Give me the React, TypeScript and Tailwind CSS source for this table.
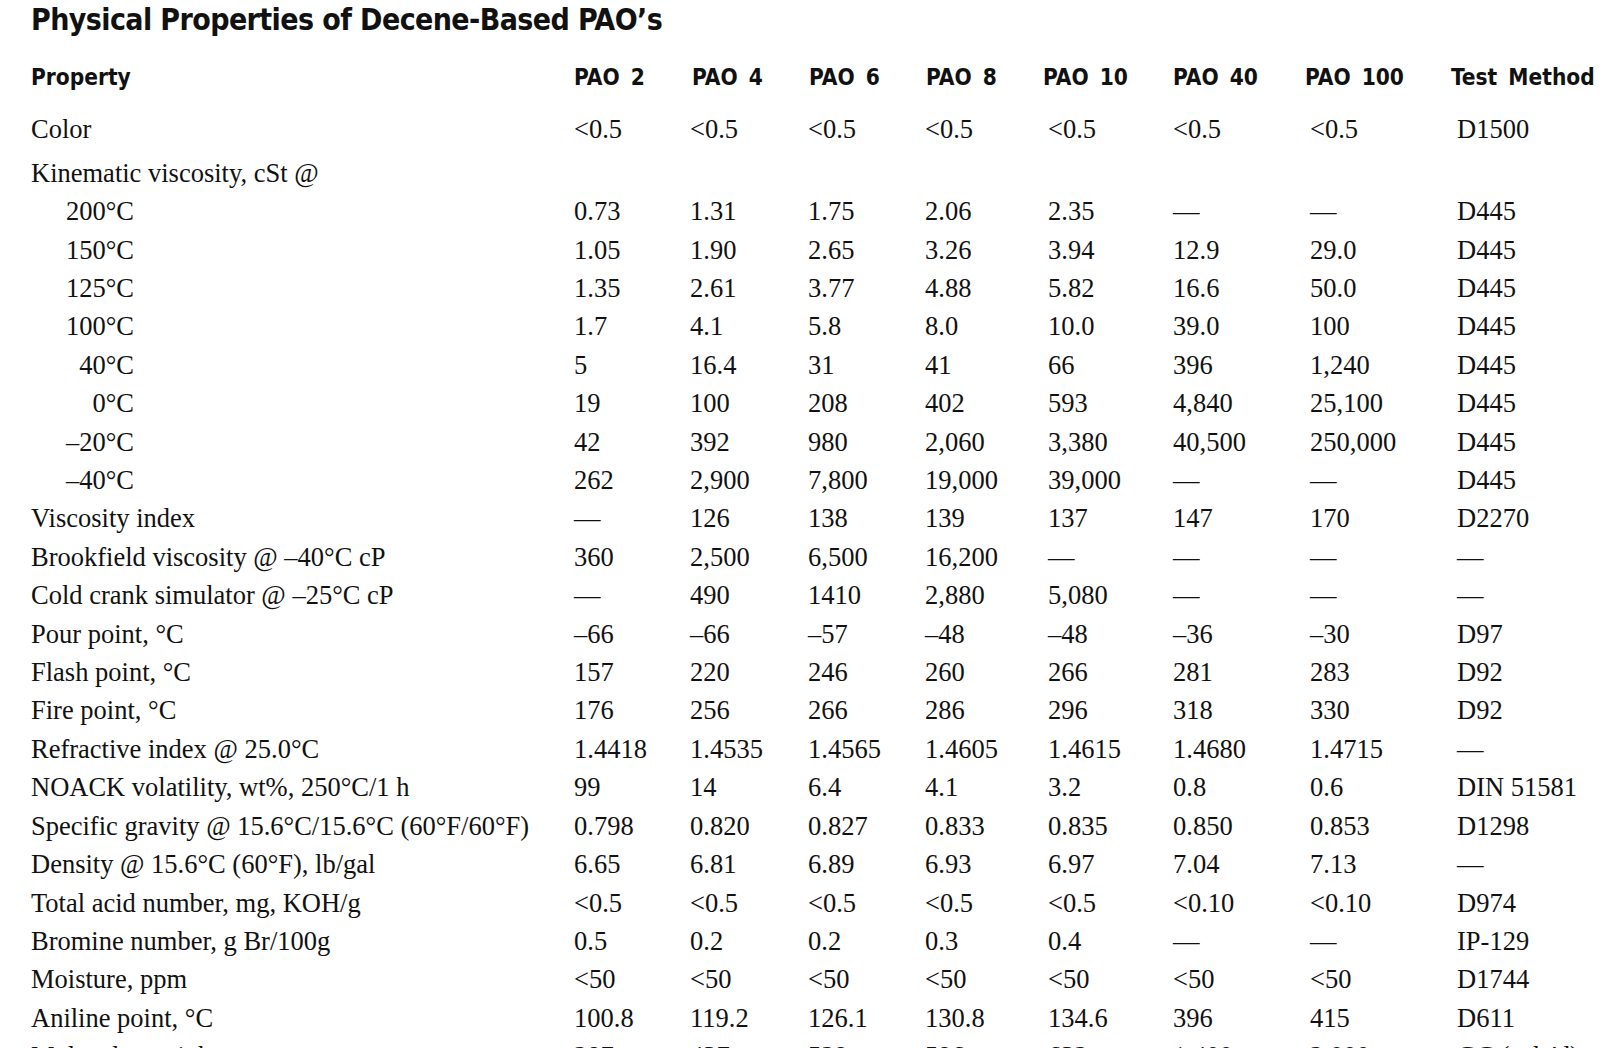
const COLS = "grid grid-cols-[543px_116px_118px_117px_123px_125px_137px_147px_1fr]";

const HEAD_FONT = "font-bold font-['Liberation_Sans_Narrow','DejaVu_Sans_Condensed',sans-serif]";

const HEADERS = [
  { label: "PAO 2", cls: "" },
  { label: "PAO 4", cls: "ml-[2px]" },
  { label: "PAO 6", cls: "ml-[1px]" },
  { label: "PAO 8", cls: "ml-[1px]" },
  { label: "PAO 10", cls: "-ml-[5px]" },
  { label: "PAO 40", cls: "" },
  { label: "PAO 100", cls: "-ml-[5px]" },
  { label: "Test Method", cls: "-ml-[6px]" },
];

type Row = { label: string; temp?: boolean; values?: string[] };

const ROWS: Row[] = [
  { label: "200°C", temp: true, values: ["0.73", "1.31", "1.75", "2.06", "2.35", "—", "—", "D445"] },
  { label: "150°C", temp: true, values: ["1.05", "1.90", "2.65", "3.26", "3.94", "12.9", "29.0", "D445"] },
  { label: "125°C", temp: true, values: ["1.35", "2.61", "3.77", "4.88", "5.82", "16.6", "50.0", "D445"] },
  { label: "100°C", temp: true, values: ["1.7", "4.1", "5.8", "8.0", "10.0", "39.0", "100", "D445"] },
  { label: "40°C", temp: true, values: ["5", "16.4", "31", "41", "66", "396", "1,240", "D445"] },
  { label: "0°C", temp: true, values: ["19", "100", "208", "402", "593", "4,840", "25,100", "D445"] },
  { label: "–20°C", temp: true, values: ["42", "392", "980", "2,060", "3,380", "40,500", "250,000", "D445"] },
  { label: "–40°C", temp: true, values: ["262", "2,900", "7,800", "19,000", "39,000", "—", "—", "D445"] },
  { label: "Viscosity index", values: ["—", "126", "138", "139", "137", "147", "170", "D2270"] },
  { label: "Brookfield viscosity @ –40°C cP", values: ["360", "2,500", "6,500", "16,200", "—", "—", "—", "—"] },
  { label: "Cold crank simulator @ –25°C cP", values: ["—", "490", "1410", "2,880", "5,080", "—", "—", "—"] },
  { label: "Pour point, °C", values: ["–66", "–66", "–57", "–48", "–48", "–36", "–30", "D97"] },
  { label: "Flash point, °C", values: ["157", "220", "246", "260", "266", "281", "283", "D92"] },
  { label: "Fire point, °C", values: ["176", "256", "266", "286", "296", "318", "330", "D92"] },
  { label: "Refractive index @ 25.0°C", values: ["1.4418", "1.4535", "1.4565", "1.4605", "1.4615", "1.4680", "1.4715", "—"] },
  { label: "NOACK volatility, wt%, 250°C/1 h", values: ["99", "14", "6.4", "4.1", "3.2", "0.8", "0.6", "DIN 51581"] },
  { label: "Specific gravity @ 15.6°C/15.6°C (60°F/60°F)", values: ["0.798", "0.820", "0.827", "0.833", "0.835", "0.850", "0.853", "D1298"] },
  { label: "Density @ 15.6°C (60°F), lb/gal", values: ["6.65", "6.81", "6.89", "6.93", "6.97", "7.04", "7.13", "—"] },
  { label: "Total acid number, mg, KOH/g", values: ["<0.5", "<0.5", "<0.5", "<0.5", "<0.5", "<0.10", "<0.10", "D974"] },
  { label: "Bromine number, g Br/100g", values: ["0.5", "0.2", "0.2", "0.3", "0.4", "—", "—", "IP-129"] },
  { label: "Moisture, ppm", values: ["<50", "<50", "<50", "<50", "<50", "<50", "<50", "D1744"] },
  { label: "Aniline point, °C", values: ["100.8", "119.2", "126.1", "130.8", "134.6", "396", "415", "D611"] },
  { label: "Molecular weight", values: ["287", "437", "529", "596", "632", "1,400", "2,000", "GC (calc'd)"] },
];

function DataRow({ row }: { row: Row }) {
  return (
    <div className={`${COLS} h-[38.41px] leading-[38.41px]`}>
      <div className="whitespace-nowrap">
        {row.temp ? <span className="inline-block w-[103px] text-right">{row.label}</span> : row.label}
      </div>
      {row.values?.map((v, i) => (
        <div key={i} className="whitespace-nowrap">
          {v}
        </div>
      ))}
    </div>
  );
}

export default function App() {
  return (
    <div className="min-h-screen bg-white text-[#111] overflow-hidden">
      <div className="pl-[31px]">
        <h1 className={`mt-[2px] h-[36px] leading-[36px] text-[30px] tracking-[-0.6px] whitespace-nowrap ${HEAD_FONT}`}>
          Physical Properties of Decene-Based PAO’s
        </h1>

        <div className={`${COLS} mt-[20px] h-[38.4px] leading-[38.4px] text-[22.5px] ${HEAD_FONT}`}>
          <div>Property</div>
          {HEADERS.map((h) => (
            <div key={h.label} className={`whitespace-nowrap [word-spacing:4px] ${h.cls}`}>
              {h.label}
            </div>
          ))}
        </div>

        <div className="text-[26.5px] font-['Liberation_Serif','Times_New_Roman',serif]">
          <div className="mt-[14px]">
            <DataRow row={{ label: "Color", values: ["<0.5", "<0.5", "<0.5", "<0.5", "<0.5", "<0.5", "<0.5", "D1500"] }} />
          </div>
          <div className="mt-[5px]">
            <DataRow row={{ label: "Kinematic viscosity, cSt @" }} />
          </div>
          {ROWS.map((r) => (
            <DataRow key={r.label} row={r} />
          ))}
        </div>
      </div>
    </div>
  );
}
